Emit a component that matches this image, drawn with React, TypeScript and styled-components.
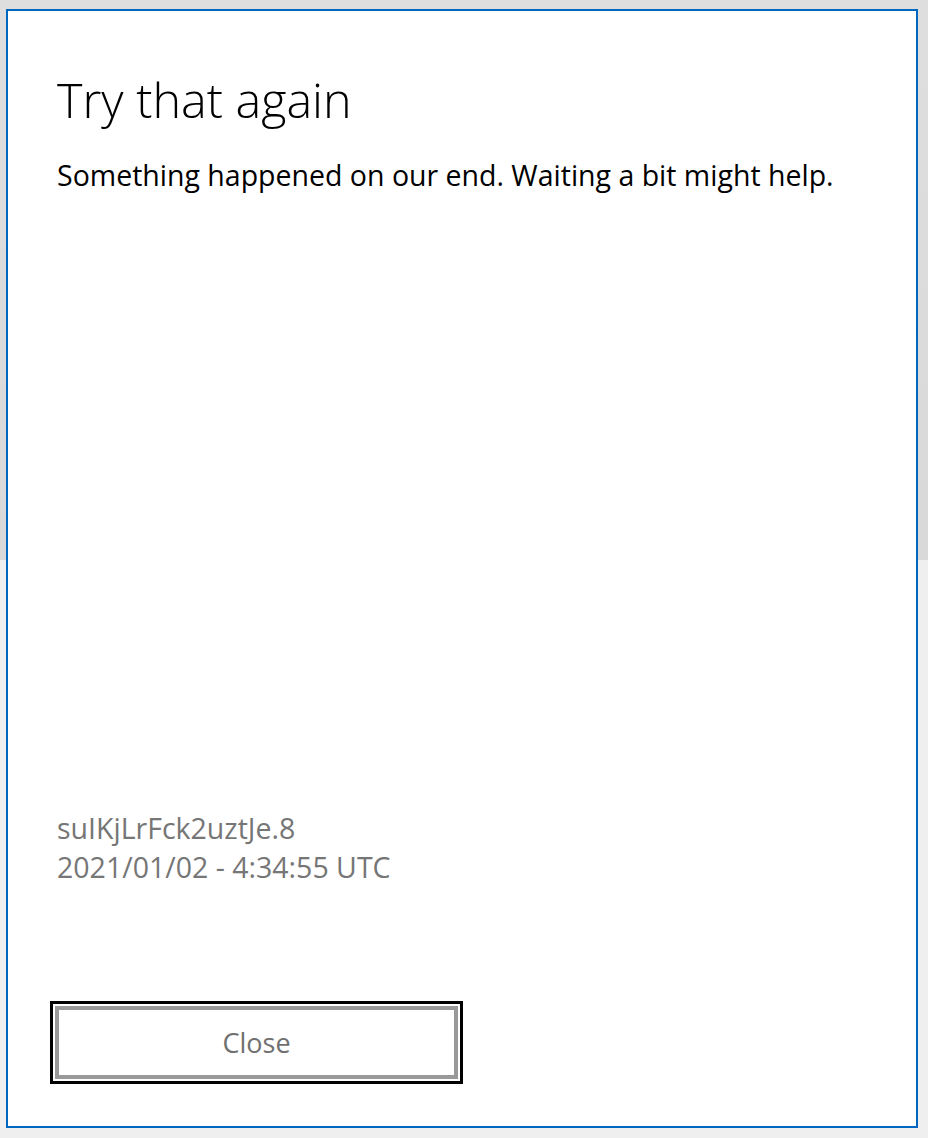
import React, { FC } from 'react';
import styled, { createGlobalStyle } from 'styled-components';

const GlobalStyle = createGlobalStyle`
  html, body {
    margin: 0;
    padding: 0;
  }
  body {
    width: 928px;
    height: 1138px;
    overflow: hidden;
    font-family: "Open Sans", "Noto Sans", "Liberation Sans", sans-serif;
    background: linear-gradient(#dedede 0, #d9d9d9 560px, #efefef 560px, #efefef 100%);
  }
`;

const Desktop = styled.div`
  width: 928px;
  height: 1138px;
  padding: 9px 10px 10px 6px;
  box-sizing: border-box;
`;

const Dialog = styled.section`
  height: 100%;
  box-sizing: border-box;
  border: 2px solid #0067c0;
  background: #fff;
  padding: 54px 48px 42px 49px;
  display: flex;
  flex-direction: column;
`;

const Title = styled.h1`
  margin: 0;
  font-size: 48.5px;
  font-weight: 300;
  line-height: 68px;
  color: #000;
`;

const Message = styled.p`
  margin: 23px 0 0;
  font-size: 28.5px;
  line-height: 38px;
  color: #000;
`;

const Meta = styled.div`
  margin-top: auto;
  display: flex;
  flex-direction: column;
  font-size: 28.5px;
  line-height: 39px;
  color: #767676;
`;

const Footer = styled.div`
  margin-top: 114px;
  display: flex;
`;

const CloseButton = styled.button`
  width: 413px;
  height: 83px;
  margin-left: -7px;
  box-sizing: border-box;
  border: 3px solid #000;
  padding: 2px;
  background: #fff;
  cursor: pointer;
  font: inherit;
`;

const ButtonFace = styled.span`
  display: flex;
  align-items: center;
  justify-content: center;
  height: 100%;
  box-sizing: border-box;
  border: 4px solid #999;
  font-size: 27px;
  color: #707070;
`;

const App: FC = () => (
  <>
    <GlobalStyle />
    <Desktop>
      <Dialog>
        <Title>Try that again</Title>
        <Message>Something happened on our end. Waiting a bit might help.</Message>
        <Meta>
          <span>suIKjLrFck2uztJe.8</span>
          <span>2021/01/02 - 4:34:55 UTC</span>
        </Meta>
        <Footer>
          <CloseButton type="button">
            <ButtonFace>Close</ButtonFace>
          </CloseButton>
        </Footer>
      </Dialog>
    </Desktop>
  </>
);

export default App;
